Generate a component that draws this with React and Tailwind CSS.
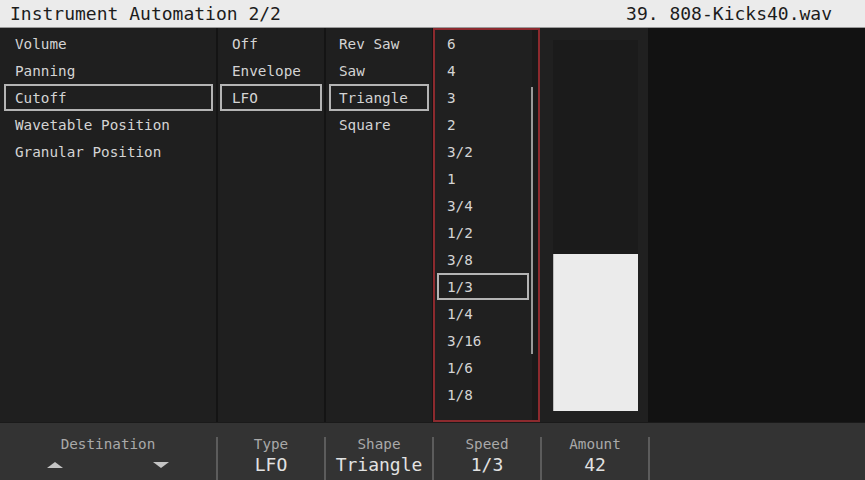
import React from "react";

const font = { fontFamily: '"DejaVu Sans Mono", "Liberation Mono", monospace' };

function Row({ text, selected, pl }) {
  return (
    <div
      className={`h-[27px] flex items-center pt-[2px] border-2 ${selected ? "border-[#b4b4b4]" : "border-transparent"} ${pl} text-[14.3px] text-[#d4d4d4] whitespace-nowrap leading-none`}
    >
      {text}
    </div>
  );
}

const speeds = ["6", "4", "3", "2", "3/2", "1", "3/4", "1/2", "3/8", "1/3", "1/4", "3/16", "1/6", "1/8"];

function Sep() {
  return <div className="w-[2px] h-full bg-[#141414]" />;
}

function BottomCol({ label, value, w }) {
  return (
    <div className={`${w} h-full flex flex-col items-center pt-[13px]`}>
      <div className="h-[16px] leading-[16px] text-[14.3px] text-[#a9a9a9]">{label}</div>
      <div className="h-[22px] leading-[22px] mt-[2px] text-[18px] text-[#e2e2e2]">{value}</div>
    </div>
  );
}

function BSep() {
  return <div className="w-[2px] self-end h-[43px] bg-[#5c5c5c]" />;
}

export default function App() {
  return (
    <div className="w-[865px] h-[480px] flex flex-col bg-[#1f1f1f] overflow-hidden" style={font}>
      <div className="h-[28px] shrink-0 bg-[#ebebeb] border-b border-[#9a9a9a] flex items-center justify-between pl-[10px] pr-[33px] text-[18px] text-[#1c1c1c] leading-none">
        <span>Instrument Automation 2/2</span>
        <span>39. 808-Kicks40.wav</span>
      </div>

      <div className="h-[394px] shrink-0 flex">
        <div className="w-[216px] pt-[2px] pl-[4px] pr-[3px]">
          <Row text="Volume" pl="pl-[9px]" />
          <Row text="Panning" pl="pl-[9px]" />
          <Row text="Cutoff" selected pl="pl-[9px]" />
          <Row text="Wavetable Position" pl="pl-[9px]" />
          <Row text="Granular Position" pl="pl-[9px]" />
        </div>
        <Sep />
        <div className="w-[106px] pt-[2px] px-[2px]">
          <Row text="Off" pl="pl-[10px]" />
          <Row text="Envelope" pl="pl-[10px]" />
          <Row text="LFO" selected pl="pl-[10px]" />
        </div>
        <Sep />
        <div className="w-[106px] pt-[2px] pl-[3px] pr-[3px]">
          <Row text="Rev Saw" pl="pl-[8px]" />
          <Row text="Saw" pl="pl-[8px]" />
          <Row text="Triangle" selected pl="pl-[8px]" />
          <Row text="Square" pl="pl-[8px]" />
        </div>
        <div className="w-[1px] h-full bg-[#141414]" />
        <div className="w-[107px] h-full border-2 border-[#8c2a2e] bg-[#202020] relative">
          <div className="absolute right-0 top-0 bottom-0 w-[6px] bg-[#1a1a1a]" />
          <div className="absolute left-[96px] top-[57px] w-[2px] h-[267px] bg-[#9a9a9a]" />
          <div className="pl-[2px] w-[94px]">
            {speeds.map((s) => (
              <Row key={s} text={s} selected={s === "1/3"} pl="pl-[8px]" />
            ))}
          </div>
        </div>
        <div className="w-[108px] h-full bg-[#202020] pl-[13px] pt-[12px] pb-[11px]">
          <div className="w-[85px] h-full bg-[#1b1b1b] flex flex-col justify-end">
            <div className="h-[157px] bg-[#ebebeb] border-l border-[#bdbdbd]" />
          </div>
        </div>
        <div className="flex-1 h-full bg-[#121212]" />
      </div>

      <div className="flex-1 bg-[#333333] border-t border-[#1a1a1a] flex">
        <div className="w-[216px] h-full flex flex-col items-center pt-[13px]">
          <div className="h-[16px] leading-[16px] text-[14.3px] text-[#a9a9a9]">Destination</div>
          <div className="w-full h-[22px] mt-[2px] flex items-center justify-between px-[47px]">
            <svg width="16" height="6" viewBox="0 0 16 6"><polygon points="0,6 8,0 16,6" fill="#c4c4c4" /></svg>
            <svg width="16" height="6" viewBox="0 0 16 6"><polygon points="0,0 16,0 8,6" fill="#c4c4c4" /></svg>
          </div>
        </div>
        <BSep />
        <BottomCol w="w-[106px]" label="Type" value="LFO" />
        <BSep />
        <BottomCol w="w-[106px]" label="Shape" value="Triangle" />
        <BSep />
        <BottomCol w="w-[106px]" label="Speed" value="1/3" />
        <BSep />
        <BottomCol w="w-[106px]" label="Amount" value="42" />
        <BSep />
      </div>
    </div>
  );
}
